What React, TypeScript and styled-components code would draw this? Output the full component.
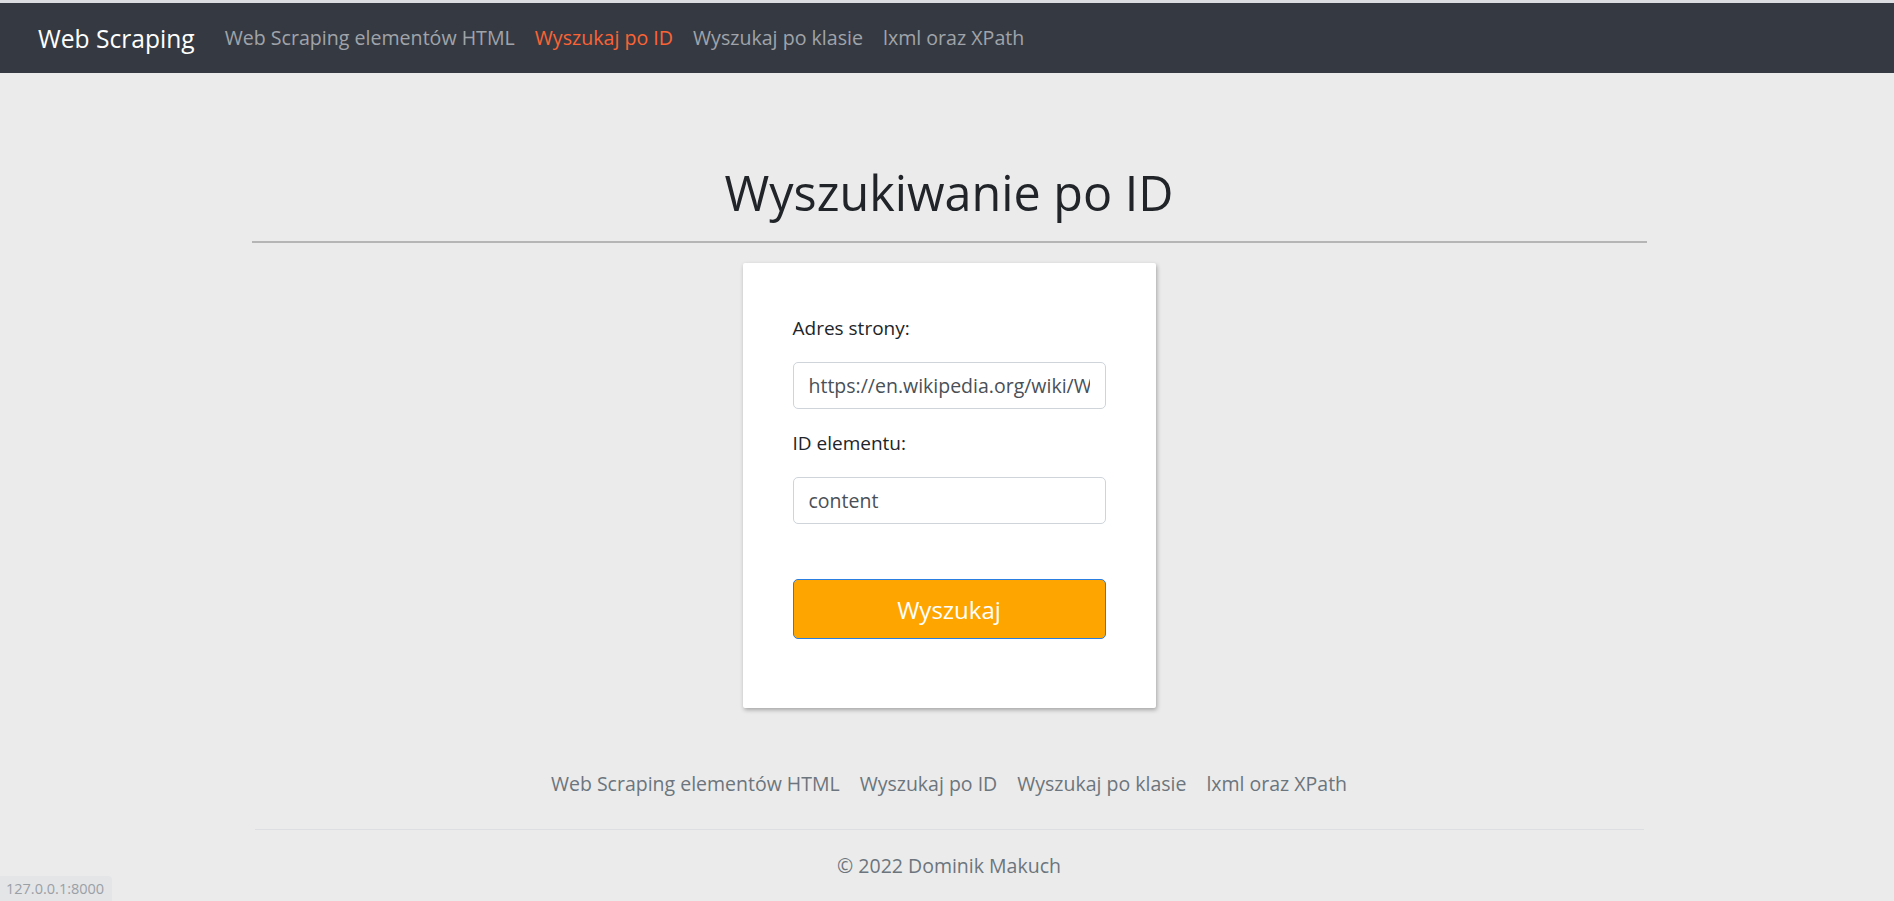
import React from "react";
import styled, { createGlobalStyle } from "styled-components";

const GlobalStyle = createGlobalStyle`
  html, body {
    margin: 0;
    padding: 0;
    background: #ebebeb;
    font-family: "Open Sans", "Noto Sans", sans-serif;
    color: #212529;
  }
  * { box-sizing: border-box; }
`;

const Page = styled.div`
  min-height: 901px;
  border-top: 3px solid #dcdde0;
`;

const Navbar = styled.nav`
  height: 70px;
  background: #353a42;
  display: flex;
  align-items: center;
  padding: 0 38px;
`;

const Brand = styled.a`
  color: #ffffff;
  font-size: 24.6px;
  line-height: 37px;
  margin-right: 20px;
  text-decoration: none;
`;

const NavList = styled.div`
  display: flex;
  align-items: center;
`;

const NavLink = styled.a<{ $active?: boolean }>`
  color: ${(p) => (p.$active ? "#fc6334" : "#a0a4aa")};
  font-size: 19.6px;
  line-height: 30px;
  padding: 10px 10px;
  text-decoration: none;
`;

const Container = styled.main`
  width: 1395px;
  margin: 0 auto;
  position: relative;
  left: 2px;
`;

const Title = styled.h1`
  margin: 89px 0 19px;
  font-size: 48.5px;
  line-height: 60px;
  font-weight: 400;
  text-align: center;
  color: #212529;
`;

const Divider = styled.hr`
  margin: 0 0 20px;
  border: 0;
  height: 2px;
  background: #b5b5b5;
`;

const Card = styled.form`
  width: 413px;
  margin: 0 auto;
  background: #ffffff;
  padding: 50px 50px 69px;
  border-radius: 2px;
  box-shadow: 1px 2px 4px rgba(0, 0, 0, 0.3);
  display: flex;
  flex-direction: column;
`;

const Label = styled.label`
  display: block;
  font-size: 19px;
  line-height: 30px;
  color: #212529;
  margin-bottom: 19px;
`;

const Input = styled.input<{ $mb?: number }>`
  display: block;
  width: 100%;
  height: 47px;
  padding: 0 15px;
  font-family: "Open Sans", "Noto Sans", sans-serif;
  font-size: 19.5px;
  color: #495057;
  background: #ffffff;
  border: 1px solid #ced4da;
  border-radius: 5px;
  outline: none;
  margin-bottom: ${(p) => p.$mb ?? 0}px;
`;

const SubmitButton = styled.button`
  margin-top: 55px;
  width: 100%;
  height: 60px;
  background: #ffa500;
  border: 1px solid #2a7de1;
  border-radius: 5px;
  color: #ffffff;
  font-family: "Open Sans", "Noto Sans", sans-serif;
  font-size: 24px;
  line-height: 37px;
  cursor: pointer;
`;

const Footer = styled.footer`
  margin-top: 51px;
`;

const FooterNav = styled.div`
  display: flex;
  justify-content: center;
  padding-bottom: 20px;
  border-bottom: 1px solid #dcdee2;
  margin: 0 3px 21px;
`;

const FooterLink = styled.a`
  color: #6c757d;
  font-size: 19.5px;
  line-height: 30px;
  padding: 10px 10px;
  text-decoration: none;
`;

const Copyright = styled.p`
  margin: 0;
  text-align: center;
  color: #6c757d;
  font-size: 19.5px;
  line-height: 30px;
`;

const StatusBubble = styled.div`
  position: fixed;
  left: 0;
  bottom: 0;
  height: 25px;
  padding: 0 8px 0 6px;
  display: flex;
  align-items: center;
  background: #e4e5e7;
  border-top-right-radius: 4px;
  color: #9aa0a6;
  font-size: 14.5px;
  font-family: "Open Sans", sans-serif;
`;

const links = [
  "Web Scraping elementów HTML",
  "Wyszukaj po ID",
  "Wyszukaj po klasie",
  "lxml oraz XPath",
];

export default function App() {
  return (
    <Page>
      <GlobalStyle />
      <Navbar>
        <Brand href="#">Web Scraping</Brand>
        <NavList>
          {links.map((l) => (
            <NavLink key={l} href="#" $active={l === "Wyszukaj po ID"}>
              {l}
            </NavLink>
          ))}
        </NavList>
      </Navbar>
      <Container>
        <Title>Wyszukiwanie po ID</Title>
        <Divider />
        <Card onSubmit={(e) => e.preventDefault()}>
          <Label htmlFor="url">Adres strony:</Label>
          <Input
            id="url"
            $mb={19}
            readOnly
            value="https://en.wikipedia.org/wiki/Web_scraping"
          />
          <Label htmlFor="elid">ID elementu:</Label>
          <Input id="elid" readOnly value="content" />
          <SubmitButton type="submit">Wyszukaj</SubmitButton>
        </Card>
        <Footer>
          <FooterNav>
            {links.map((l) => (
              <FooterLink key={l} href="#">
                {l}
              </FooterLink>
            ))}
          </FooterNav>
          <Copyright>© 2022 Dominik Makuch</Copyright>
        </Footer>
      </Container>
      <StatusBubble>127.0.0.1:8000</StatusBubble>
    </Page>
  );
}
